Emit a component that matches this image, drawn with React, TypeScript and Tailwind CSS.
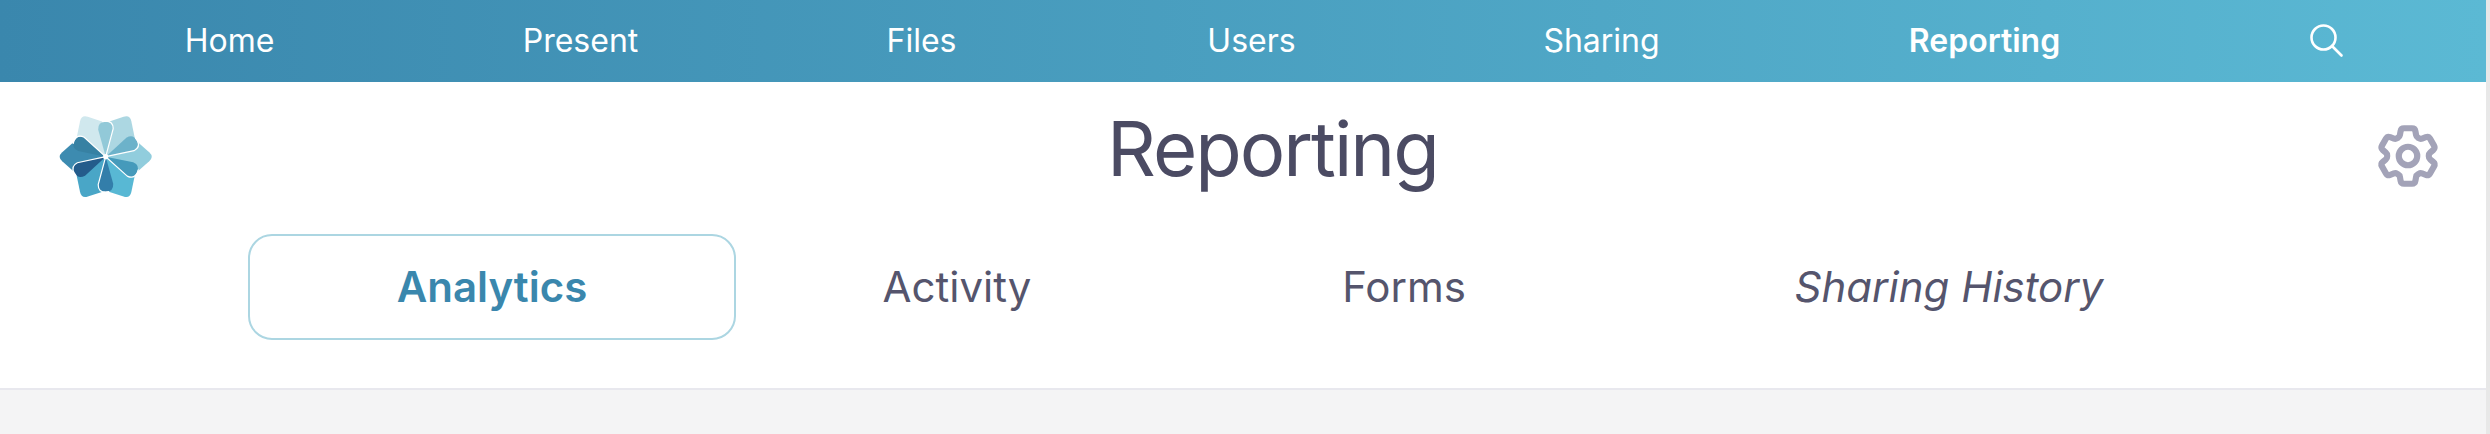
import { HiOutlineCog6Tooth } from "react-icons/hi2"

const navItems = [
  { label: "Home", width: "w-[351px]" },
  { label: "Present", width: "w-[351px]" },
  { label: "Files", width: "w-[331px]" },
  { label: "Users", width: "w-[329px]" },
  { label: "Sharing", width: "w-[371px]" },
  { label: "Reporting", width: "w-[395px]" },
]

const kites = [
  { angle: -120, fill: "#d0e8ee" },
  { angle: -60, fill: "#acd7e2" },
  { angle: 0, fill: "#91cddd" },
  { angle: 60, fill: "#58b8d4" },
  { angle: 120, fill: "#49a6c7" },
  { angle: 180, fill: "#3d8bb0" },
]

const petals = [
  { angle: -90, fill: "#92c9d8" },
  { angle: -27, fill: "#6cb2ca" },
  { angle: 27, fill: "#459abb" },
  { angle: 90, fill: "#337eaa" },
  { angle: 153, fill: "#245c8b" },
  { angle: 207, fill: "#3781a3" },
]

const Logo = () => (
  <svg width="100" height="90" viewBox="0 0 100 90">
    <g transform="translate(50.7 44.7)">
      {kites.map((kite) => (
        <path
          key={kite.angle}
          transform={`rotate(${kite.angle})`}
          d="M0 0 L29.4 -17 L43.5 -4.5 Q48.5 0 43.5 4.5 L29.4 17 Z"
          fill={kite.fill}
        />
      ))}
      {petals.map((petal) => (
        <g key={petal.angle} transform={`rotate(${petal.angle})`}>
          <path d="M0 0 L27 -7.5 Q35 -8 35 0 Q35 7 28 7.5 Z" fill={petal.fill} />
          <path
            d="M0 0 L28 7.5 Q35.5 7.5 35.5 0 L35 -3"
            fill="none"
            stroke="#fff"
            strokeWidth="1.2"
            strokeLinecap="round"
          />
        </g>
      ))}
      <circle r="2.6" fill="#fff" />
    </g>
  </svg>
)

const SearchIcon = () => (
  <svg width="34" height="34" viewBox="0 0 34 34" fill="none" stroke="#fff" strokeWidth="2.6" className="ml-[128px]">
    <circle cx="13.5" cy="13.5" r="12" />
    <path d="M22 22 L31.5 31.5" strokeLinecap="round" />
  </svg>
)

const App = () => {
  return (
    <div className="w-[2490px] h-[434px] bg-[#f4f4f5] overflow-hidden font-['Inter',sans-serif] flex">
      <div className="flex-1 flex flex-col">
        <nav className="h-[82px] flex items-center pl-[54px] bg-gradient-to-r from-[#3a87ad] to-[#5bb9d4] text-white text-[32px]">
          {navItems.map((item) => (
            <a
              key={item.label}
              className={`${item.width} text-center ${item.label === "Reporting" ? "font-semibold" : ""}`}
            >
              {item.label}
            </a>
          ))}
          <SearchIcon />
        </nav>

        <header className="bg-white h-[308px] border-b-2 border-[#e8e8ee] flex flex-col">
          <div className="flex justify-between pl-[55px] pr-[41px] h-[152px]">
            <div className="pt-[30px]"><Logo /></div>
            <h1 className="text-[76px] leading-none tracking-[-2px] text-[#4b4b63] pt-[28px] pl-[19px]">Reporting</h1>
            <div className="pt-[37px]"><HiOutlineCog6Tooth size={74} color="#a3a3b8" strokeWidth={2} /></div>
          </div>
          <div className="flex items-start pl-[248px] text-[42px] text-[#55556d]">
            <a className="w-[488px] h-[106px] pb-[2px] border-2 border-[#acd6e2] rounded-[24px] flex items-center justify-center font-semibold text-[#3a87ad]">
              Analytics
            </a>
            <a className="w-[442px] h-[106px] pb-[2px] flex items-center justify-center">Activity</a>
            <a className="w-[452px] h-[106px] pb-[2px] flex items-center justify-center">Forms</a>
            <a className="w-[638px] h-[106px] pb-[2px] flex items-center justify-center italic">Sharing History</a>
          </div>
        </header>
      </div>
      <div className="w-[4px] bg-[#e8e8e8]" />
    </div>
  )
}

export default App
